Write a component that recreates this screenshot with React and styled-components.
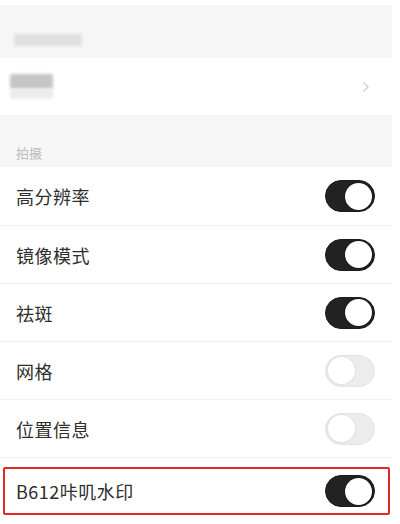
import React from 'react';
import styled, { createGlobalStyle } from 'styled-components';

const GlobalStyle = createGlobalStyle`
  html, body {
    margin: 0;
    padding: 0;
    background: #ffffff;
  }
  body {
    font-family: "Noto Sans CJK SC", "Noto Sans", sans-serif;
  }
`;

const Screen = styled.div`
  width: 392px;
  padding-top: 5px;
  background: #ffffff;
`;

const GraySection = styled.div`
  background: #f6f6f6;
  height: ${p => p.h}px;
  box-sizing: border-box;
  padding: 0 0 0 ${p => p.left || 16}px;
  display: flex;
  align-items: flex-end;
  padding-bottom: ${p => p.bottom}px;
`;

const Blur = styled.div`
  width: ${p => p.w}px;
  height: ${p => p.hh}px;
  background: ${p => p.c};
  filter: blur(1.5px);
  border-radius: 2px;
`;

const BlurStack = styled.div`
  display: flex;
  flex-direction: column;
`;

const SectionTitle = styled.span`
  font-size: 13px;
  color: #bdbdbd;
  line-height: 1;
`;

const LinkRow = styled.div`
  height: 57px;
  background: #ffffff;
  display: flex;
  align-items: center;
  justify-content: space-between;
  padding: 0 22px 0 10px;
`;

const Chevron = styled.svg`
  width: 8px;
  height: 12px;
`;

const Row = styled.div`
  height: 58px;
  box-sizing: border-box;
  display: flex;
  align-items: center;
  justify-content: space-between;
  padding: 0 17px 0 16px;
  border-top: ${p => (p.first ? 'none' : '1px solid #f1f1f1')};
`;

const Spacer = styled.div`
  height: 10px;
  border-top: 1px solid #f1f1f1;
  box-sizing: border-box;
`;

const HighlightRow = styled(Row)`
  border: 2px solid #e5281f;
  border-radius: 2px;
  margin-left: 3px;
  width: 387px;
  height: 48px;
  padding: 0 13px 0 11px;
`;

const Label = styled.span`
  font-size: 18px;
  color: #2e2e2e;
  letter-spacing: 0.5px;
`;

const Track = styled.div`
  width: 50px;
  height: 32px;
  border-radius: 16px;
  box-sizing: border-box;
  padding: 2px;
  display: flex;
  justify-content: ${p => (p.on ? 'flex-end' : 'flex-start')};
  align-items: center;
  background: ${p => (p.on ? '#222222' : '#ececec')};
  border: 1px solid ${p => (p.on ? '#1c1c1c' : '#e4e4e4')};
`;

const Knob = styled.div`
  width: 27px;
  height: 27px;
  border-radius: 50%;
  background: #ffffff;
  box-shadow: ${p => (p.on ? '0 0 0 1px #1a1a1a' : '0 0 0 1px #e2e2e2, 0 1px 2px rgba(0,0,0,0.06)')};
`;

const Toggle = ({ on }) => (
  <Track on={on ? 1 : 0}>
    <Knob on={on ? 1 : 0} />
  </Track>
);

const settings = [
  { label: '高分辨率', on: true },
  { label: '镜像模式', on: true },
  { label: '祛斑', on: true },
  { label: '网格', on: false },
  { label: '位置信息', on: false },
];

export default function App() {
  return (
    <>
      <GlobalStyle />
      <Screen>
        <GraySection h={53} left={14} bottom={12}>
          <Blur w={68} hh={12} c="#e0e0e0" />
        </GraySection>
        <LinkRow>
          <BlurStack>
            <Blur w={43} hh={15} c="#c6c6c6" />
            <Blur w={43} hh={10} c="#ececec" />
          </BlurStack>
          <Chevron viewBox="0 0 8 12">
            <path d="M1.5 1.5 L6 6 L1.5 10.5" fill="none" stroke="#cfcfcf" strokeWidth="1.4" />
          </Chevron>
        </LinkRow>
        <GraySection h={52} bottom={8}>
          <SectionTitle>拍摄</SectionTitle>
        </GraySection>
        {settings.map((s, i) => (
          <Row key={s.label} first={i === 0 ? 1 : 0}>
            <Label>{s.label}</Label>
            <Toggle on={s.on} />
          </Row>
        ))}
        <Spacer />
        <HighlightRow first={1}>
          <Label>B612咔叽水印</Label>
          <Toggle on />
        </HighlightRow>
      </Screen>
    </>
  );
}
